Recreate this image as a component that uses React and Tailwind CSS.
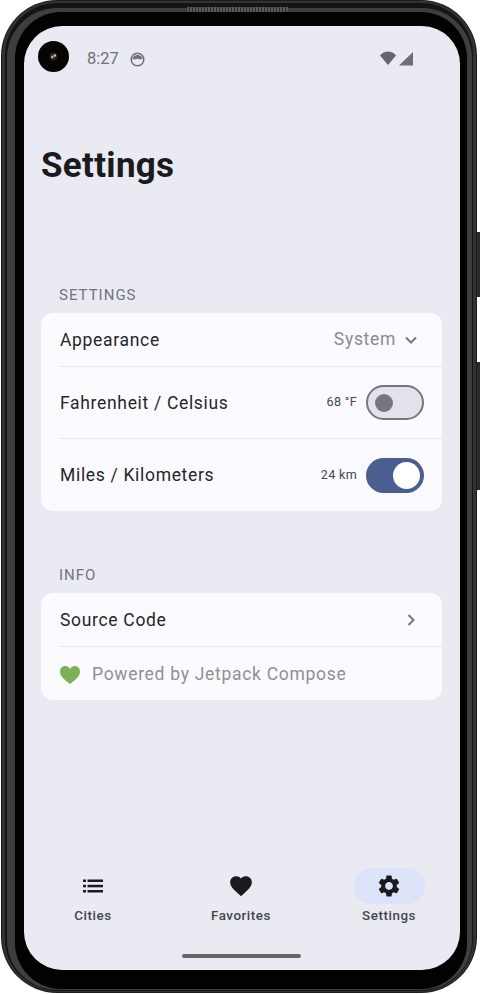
import React from "react";

const roboto = { fontFamily: "Roboto, sans-serif" };

function Row({ label, right, h }) {
  return (
    <div className={`flex items-center justify-between pl-[19px] pr-[18px] ${h}`}>
      <span className="text-[17.5px] leading-6 tracking-[0.68px] text-[#26262a]">{label}</span>
      {right}
    </div>
  );
}

function Divider() {
  return <div className="ml-[18px] h-px bg-[#e6e6ee]" />;
}

function Toggle({ on }) {
  return on ? (
    <div className="flex h-[35px] w-[58px] items-center justify-end rounded-full bg-[#4a5f8f] pr-[4px]">
      <div className="h-[27px] w-[27px] rounded-full bg-white" />
    </div>
  ) : (
    <div className="flex h-[35px] w-[58px] items-center rounded-full border-2 border-[#75767f] bg-[#e2e2ea] pl-[7px]">
      <div className="h-[18px] w-[18px] rounded-full bg-[#75767f]" />
    </div>
  );
}

function NavItem({ label, active, children }) {
  return (
    <div className="flex w-[72px] flex-col items-center">
      <div className={`flex h-[36px] w-[71px] items-center justify-center rounded-full ${active ? "bg-[#dde3f8]" : ""}`}>
        {children}
      </div>
      <span className="mt-[2px] text-[13.4px] font-medium leading-[20px] tracking-[0.55px] text-[#44464f]">{label}</span>
    </div>
  );
}

export default function App() {
  return (
    <div className="relative h-[994px] w-[480px] bg-white" style={roboto}>
      <div className="absolute left-[477px] top-[232px] h-[65px] w-[3px] bg-[#2a2a2a]" />
      <div className="absolute left-[477px] top-[362px] h-[128px] w-[3px] bg-[#2a2a2a]" />
      <div className="ml-[1px] h-[993px] w-[476px] rounded-[56px] bg-[#1c1c1c] p-[1px]">
        <div className="h-full w-full rounded-[55px] bg-[#333333] pb-[1px] pl-[3px] pr-[3px] pt-[2px]">
          <div className="h-full w-full rounded-[52px] bg-[#141414] pb-[1px] pl-[2px] pr-[1px] pt-[5px]">
            <div className="h-full w-full rounded-[50px] bg-[#3e3e3e] pb-[1px] pl-[8px] pr-[5px] pt-[4px]">
              <div className="relative h-full w-full rounded-[46px] bg-[#020202] pb-[19px] pl-[9px] pr-[7px] pt-[14px]">
                <div className="absolute left-[172px] top-[-5px] h-[5px] w-[101px] rounded-b-[3px] bg-[repeating-linear-gradient(90deg,#5a5a5a_0,#5a5a5a_2px,#2a2a2a_2px,#2a2a2a_3px)]" />
                <div className="flex h-[944px] w-[436px] flex-col rounded-[38px] bg-[#e9eaf2]">
                  <div className="relative flex h-[66px] items-start">
                    <div className="absolute left-[14px] top-[15px] flex h-[31px] w-[31px] items-center justify-center rounded-full bg-[#050505]">
                      <svg width="9" height="9" viewBox="0 0 9 9">
                        <circle cx="4.500" cy="4.500" r="4" fill="#2a211c" />
                        <ellipse cx="3.300" cy="5" rx="1.300" ry="1.600" fill="#c9a98f" />
                        <ellipse cx="5.800" cy="3.500" rx="1.200" ry="1.200" fill="#e2c9b2" />
                      </svg>
                    </div>
                    <span className="ml-[63px] mt-[23px] text-[16.5px] leading-5 text-[#6f7076]">8:27</span>
                    <svg className="ml-[11px] mt-[26px]" width="15" height="15" viewBox="0 0 15 15">
                      <circle cx="7.500" cy="7.500" r="6.300" fill="#e9eaf2" stroke="#6f7076" strokeWidth="1.500" />
                      <path d="M2.500 7.500C2.500 1.500 12.500 1.500 12.500 7.500L11 7 9.500 7.500 7.500 6.500 5.500 7.500 4 7Z" fill="#6f7076" />
                    </svg>
                    <svg className="absolute left-[356px] top-[25px]" width="34" height="16" viewBox="0 0 34 16">
                      <path d="M0 4.500C4-1 12-1 16 4.500L8 14Z" fill="#65666c" />
                      <path d="M33 1V14.500H19Z" fill="#6f7076" />
                    </svg>
                  </div>

                  <h1 className="ml-[17px] mt-[54px] text-[35px] font-bold leading-[40px] tracking-[0.3px] text-[#1b1b1f]">Settings</h1>

                  <div className="ml-[35px] mt-[98px] pt-[1px] text-[15px] leading-5 tracking-[1px] text-[#74757c]">SETTINGS</div>
                  <div className="ml-[17px] mt-[8px] w-[401px] rounded-[12px] bg-[#fafaff]">
                    <Row
                      label="Appearance"
                      h="h-[53px]"
                      right={
                        <div className="flex items-center text-[#8a8b92]">
                          <span className="text-[17.5px] tracking-[0.68px]">System</span>
                          <svg className="ml-[7px] mr-[5px]" width="16" height="16" viewBox="0 0 16 16" fill="none" stroke="#75767f" strokeWidth="2">
                            <path d="M3 5.500L8 10.500L13 5.500" />
                          </svg>
                        </div>
                      }
                    />
                    <Divider />
                    <Row
                      label="Fahrenheit / Celsius"
                      h="h-[71px]"
                      right={
                        <div className="flex items-center">
                          <span className="mr-[9px] text-[12.6px] tracking-[0.3px] text-[#44464f]">68 °F</span>
                          <Toggle />
                        </div>
                      }
                    />
                    <Divider />
                    <Row
                      label="Miles / Kilometers"
                      h="h-[72px]"
                      right={
                        <div className="flex items-center">
                          <span className="mr-[9px] text-[12.6px] tracking-[0.3px] text-[#44464f]">24 km</span>
                          <Toggle on />
                        </div>
                      }
                    />
                  </div>

                  <div className="ml-[35px] mt-[54px] text-[15px] leading-5 tracking-[1px] text-[#74757c]">INFO</div>
                  <div className="ml-[17px] mt-[8px] w-[401px] rounded-[12px] bg-[#fafaff]">
                    <Row
                      label="Source Code"
                      h="h-[53px]"
                      right={
                        <svg className="mr-[5px]" width="16" height="16" viewBox="0 0 16 16" fill="none" stroke="#75767f" strokeWidth="2">
                          <path d="M5.500 3L10.500 8L5.500 13" />
                        </svg>
                      }
                    />
                    <Divider />
                    <div className="flex h-[53px] items-center pl-[18px] pt-[2px]">
                      <svg width="22" height="20" viewBox="0 0 22 20">
                        <path d="M11 19C5 14.500 1 11 1 6.500 1 3.200 3.500 1 6.200 1 8.200 1 10 2 11 4 12 2 13.800 1 15.800 1 18.500 1 21 3.200 21 6.500 21 11 17 14.500 11 19Z" fill="#7cb257" />
                      </svg>
                      <span className="ml-[11px] text-[17.5px] tracking-[0.7px] text-[#8f9097]">Powered by Jetpack Compose</span>
                    </div>
                  </div>

                  <div className="mt-[168px] flex justify-between pl-[33px] pr-[35px]">
                    <NavItem label="Cities">
                      <svg width="22" height="16" viewBox="0 0 22 16" fill="#1b1b1f">
                        <rect x="1" y="1.500" width="3" height="2.500" />
                        <rect x="1" y="6.800" width="3" height="2.500" />
                        <rect x="1" y="12" width="3" height="2.500" />
                        <rect x="5.500" y="1.500" width="15.500" height="2.500" />
                        <rect x="5.500" y="6.800" width="15.500" height="2.500" />
                        <rect x="5.500" y="12" width="15.500" height="2.500" />
                      </svg>
                    </NavItem>
                    <NavItem label="Favorites">
                      <svg width="26" height="26" viewBox="0 0 24 24" fill="#1b1b1f">
                        <path d="M12 21.350l-1.450-1.320C5.400 15.360 2 12.280 2 8.500 2 5.420 4.420 3 7.500 3c1.740 0 3.410.81 4.500 2.090C13.090 3.810 14.760 3 16.500 3 19.580 3 22 5.420 22 8.500c0 3.780-3.400 6.860-8.550 11.540L12 21.350z" />
                      </svg>
                    </NavItem>
                    <NavItem label="Settings" active>
                      <svg width="26" height="26" viewBox="0 0 24 24" fill="#1b1b1f">
                        <path d="M19.140 12.940c.04-.3.060-.61.060-.94 0-.32-.02-.64-.07-.94l2.030-1.580c.18-.14.230-.41.120-.61l-1.920-3.320c-.12-.22-.37-.29-.59-.22l-2.390.96c-.5-.38-1.030-.7-1.620-.94l-.36-2.540c-.04-.24-.24-.41-.48-.41h-3.840c-.24 0-.43.170-.47.410l-.36 2.540c-.59.240-1.130.570-1.620.94l-2.390-.96c-.22-.08-.47 0-.59.220L2.740 8.870c-.12.210-.08.470.12.610l2.030 1.580c-.05.300-.09.630-.09.940s.02.640.07.940l-2.030 1.580c-.18.140-.23.410-.12.610l1.920 3.320c.12.220.37.290.59.220l2.390-.96c.5.380 1.030.7 1.620.94l.36 2.540c.05.240.24.410.48.410h3.840c.24 0 .44-.17.47-.41l.36-2.540c.59-.24 1.130-.56 1.620-.94l2.390.96c.22.080.47 0 .59-.22l1.920-3.320c.12-.22.070-.47-.12-.61l-2.010-1.580zM12 15.600c-1.980 0-3.600-1.620-3.600-3.600s1.620-3.600 3.600-3.600 3.600 1.620 3.600 3.600-1.620 3.600-3.600 3.600z" />
                      </svg>
                    </NavItem>
                  </div>

                  <div className="ml-[158px] mt-[28px] h-[4px] w-[119px] rounded-full bg-[#666666]" />
                </div>
              </div>
            </div>
          </div>
        </div>
      </div>
    </div>
  );
}
